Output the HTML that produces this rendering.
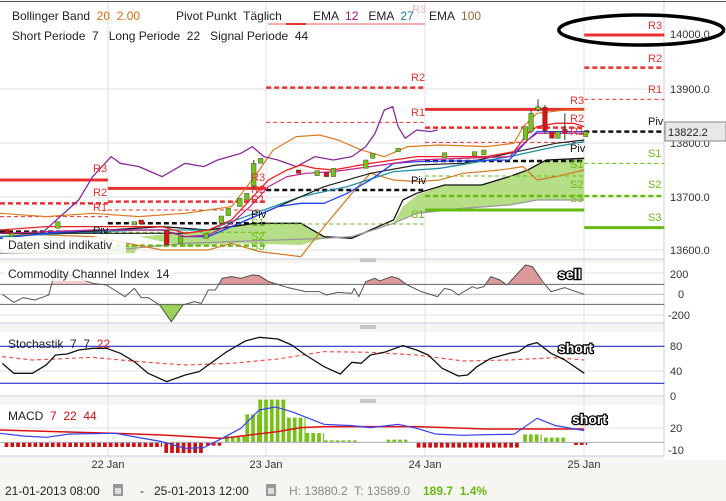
<!DOCTYPE html>
<html><head><meta charset="utf-8"><style>
body{margin:0;width:726px;height:501px;background:#f6f5f1;font-family:"Liberation Sans",sans-serif;overflow:hidden;position:relative}
svg{position:absolute;left:0;top:0}
text{font-family:"Liberation Sans",sans-serif;white-space:pre}
</style></head><body>
<svg width="726" height="501" viewBox="0 0 726 501" xml:space="preserve">
<rect x="0" y="2" width="664" height="257" fill="#fff"/>
<rect x="0" y="263" width="664" height="60" fill="#fff"/>
<rect x="0" y="332" width="664" height="64" fill="#fff"/>
<rect x="0" y="405" width="664" height="51" fill="#fff"/>
<rect x="664" y="0" width="62" height="460" fill="#fff"/>
<line x1="0" y1="1.5" x2="726" y2="1.5" stroke="#555"/>
<g stroke="#e2e2e2" stroke-width="1">
<line x1="0" y1="89" x2="664" y2="89"/><line x1="0" y1="143" x2="664" y2="143"/><line x1="0" y1="197" x2="664" y2="197"/><line x1="0" y1="250" x2="664" y2="250"/>
<line x1="108" y1="2" x2="108" y2="456"/><line x1="266" y1="2" x2="266" y2="456"/><line x1="425" y1="2" x2="425" y2="456"/><line x1="584" y1="2" x2="584" y2="456"/>
<line x1="0" y1="273" x2="664" y2="273"/><line x1="0" y1="315" x2="664" y2="315"/>
<line x1="0" y1="371" x2="664" y2="371"/><line x1="0" y1="428" x2="664" y2="428"/>
</g>
<g stroke="#ccd" stroke-width="1"><line x1="664" y1="2" x2="664" y2="456"/>
<line x1="0" y1="259" x2="664" y2="259"/><line x1="0" y1="323" x2="664" y2="323"/><line x1="0" y1="396" x2="664" y2="396"/><line x1="0" y1="456" x2="664" y2="456"/></g>
<g stroke="#999"><line x1="360" y1="259" x2="376" y2="259"/><line x1="360" y1="261" x2="376" y2="261"/><line x1="360" y1="326" x2="376" y2="326"/><line x1="360" y1="328" x2="376" y2="328"/><line x1="360" y1="400" x2="376" y2="400"/><line x1="360" y1="402" x2="376" y2="402"/></g>

<g transform="scale(0.463,0.3333)" fill="none" stroke-linejoin="round">
<path d="M290,780 L300,710 L400,740 L500,730 L650,735 L700,715 L760,710 L800,690 L850,670 L870,620 L900,585 L960,555 L1040,555 L1100,530 L1140,510 L1180,480 L1262,475 L1262,600 L1160,600 L1100,615 L1000,625 L900,640 L850,670 L760,715 L700,710 L650,670 L550,670 L450,690 L380,700 L300,710" fill="#b5de86" stroke="none"/>
<path d="M0,760 L60,740 L200,745 L300,735 L290,760 Z" fill="#b5de86" stroke="none"/>
<path d="M0,710 L350,680 L450,690 L550,670 L650,670 L700,710 L760,715 L800,690 L850,660 L870,600 L900,580 L960,555 L1040,555 L1100,530 L1140,510 L1180,480 L1262,475" stroke="#111" stroke-width="1.3" vector-effect="non-scaling-stroke"/>
<path d="M0,760 L250,750 L400,730 L700,715 L760,710 L850,670 L900,640 L1000,625 L1100,615 L1160,600 L1262,600" stroke="#999" stroke-width="1.3" vector-effect="non-scaling-stroke"/>
<path d="M0,540H233 M233,565H575 M918,328H1262 M1262,105H1435" stroke="#e83030" stroke-width="3" vector-effect="non-scaling-stroke"/>
<path d="M0,610H233 M233,605H575 M575,263H915 M918,383H1262 M1262,203H1435" stroke="#e83030" stroke-width="2.5" stroke-dasharray="5 3" vector-effect="non-scaling-stroke"/>
<path d="M0,650H233 M233,630H575 M575,367H915 M918,427H1262 M1262,298H1435" stroke="#e83030" stroke-width="1" stroke-dasharray="4 3" vector-effect="non-scaling-stroke"/>
<path d="M0,695H233 M233,670H575 M575,570H915 M918,483H1262 M1262,395H1568" stroke="#111" stroke-width="2.5" stroke-dasharray="5 3" vector-effect="non-scaling-stroke"/>
<path d="M0,715H233 M233,697H575 M575,672H915 M918,528H1262 M1262,490H1435" stroke="#66bb11" stroke-width="1" stroke-dasharray="4 3" vector-effect="non-scaling-stroke"/>
<path d="M233,737H575 M918,588H1262 M1262,588H1435" stroke="#66bb11" stroke-width="2.5" stroke-dasharray="5 3" vector-effect="non-scaling-stroke"/>
<path d="M918,630H1262 M1262,683H1435" stroke="#66bb11" stroke-width="3" vector-effect="non-scaling-stroke"/>
<path d="M0,640 L100,650 L200,640 L300,650 L400,640 L500,620 L550,530 L590,450 L640,410 L690,405 L730,420 L780,450 L830,470 L880,440 L950,435 L1050,440 L1110,430 L1130,380 L1160,340 L1220,330 L1262,330" stroke="#e07a20" stroke-width="1.2" vector-effect="non-scaling-stroke"/>
<path d="M0,700 L200,710 L350,750 L450,750 L500,730 L560,755 L650,770 L700,680 L760,580 L800,520 L850,540 L900,545 L950,540 L1000,520 L1080,510 L1130,500 L1160,540 L1200,530 L1262,510" stroke="#d47a20" stroke-width="1.2" vector-effect="non-scaling-stroke"/>
<path d="M90,700 L130,650 L170,600 L200,530 L240,470 L260,490 L300,500 L350,530 L400,490 L440,500 L470,480 L520,460 L545,440 L570,470 L600,480 L640,500 L680,470 L720,480 L760,470 L790,440 L810,400 L830,330 L848,320 L860,380 L875,415 L900,390 L930,395 L945,390" stroke="#8a2a9a" stroke-width="1.3" vector-effect="non-scaling-stroke"/>
<path d="M0,710 L300,690 L450,690 L550,640 L650,590 L750,560 L850,515 L950,505 L1100,470 L1200,440 L1262,425" stroke="#2090a8" stroke-width="1.3" vector-effect="non-scaling-stroke"/>
<path d="M0,700 L400,700 L500,680 L600,620 L700,560 L800,520 L900,495 L1000,490 L1100,460 L1200,430 L1262,420" stroke="#222" stroke-width="1.2" vector-effect="non-scaling-stroke"/>
<path d="M0,715 L100,700 L200,690 L350,690 L400,710 L450,710 L550,650 L600,620 L650,610 L700,610 L750,580 L800,540 L850,490 L900,485 L1100,480 L1140,420 L1160,395 L1262,395" stroke="#2244ee" stroke-width="1.3" vector-effect="non-scaling-stroke"/>
<path d="M0,700 L200,690 L350,690 L400,710 L450,705 L500,670 L540,620 L580,560 L620,530 L660,520 L720,515 L800,500 L900,480 L1100,470 L1140,420 L1160,400 L1200,400 L1262,400" stroke="#c0208a" stroke-width="1.2" vector-effect="non-scaling-stroke"/>
<path d="M0,690 L100,680 L200,680 L350,680 L400,700 L450,690 L500,660 L540,600 L580,540 L620,510 L650,495 L680,505 L720,510 L760,500 L800,490 L850,480 L900,470 L950,470 L1050,470 L1110,455 L1140,400 L1160,380 L1200,370 L1240,370 L1262,380" stroke="#ee2222" stroke-width="1.3" vector-effect="non-scaling-stroke"/>
<g stroke="#333" stroke-width="1">
<line x1="548" y1="480" x2="548" y2="570" vector-effect="non-scaling-stroke"/><line x1="1147" y1="330" x2="1147" y2="400" vector-effect="non-scaling-stroke"/><line x1="1162" y1="298" x2="1162" y2="335" vector-effect="non-scaling-stroke"/><line x1="1177" y1="315" x2="1177" y2="400" vector-effect="non-scaling-stroke"/><line x1="1220" y1="340" x2="1220" y2="420" vector-effect="non-scaling-stroke"/>
</g>
<g fill="#77c11a" stroke="#333">
<rect x="543" y="490" width="10" height="70"/><rect x="558" y="475" width="10" height="15"/><rect x="473" y="648" width="10" height="22"/><rect x="488" y="625" width="10" height="22"/><rect x="513" y="595" width="10" height="25"/><rect x="528" y="580" width="10" height="20"/>
<rect x="1142" y="340" width="10" height="55"/><rect x="1157" y="320" width="10" height="10"/><rect x="1200" y="395" width="10" height="20"/><rect x="1260" y="395" width="10" height="15"/><rect x="1130" y="380" width="10" height="40"/>
<rect x="680" y="512" width="10" height="15"/><rect x="715" y="505" width="10" height="25"/><rect x="785" y="480" width="10" height="25"/><rect x="800" y="460" width="10" height="15"/><rect x="855" y="445" width="10" height="10"/><rect x="955" y="458" width="10" height="15"/><rect x="1020" y="455" width="10" height="12"/><rect x="1040" y="450" width="10" height="15"/><rect x="120" y="665" width="10" height="20"/><rect x="20" y="700" width="10" height="10"/><rect x="285" y="665" width="10" height="10"/><rect x="440" y="700" width="10" height="15"/><rect x="385" y="710" width="10" height="20"/>
</g>
<g fill="#dd1111" stroke="#333">
<rect x="1172" y="322" width="10" height="70"/><rect x="1187" y="395" width="10" height="20"/><rect x="1215" y="388" width="10" height="10"/><rect x="355" y="690" width="10" height="45"/><rect x="300" y="660" width="10" height="12"/><rect x="640" y="510" width="10" height="10"/><rect x="700" y="518" width="10" height="12"/><rect x="10" y="690" width="10" height="10"/>
</g>
<ellipse cx="1385" cy="90" rx="178" ry="45" stroke="#000" stroke-width="3.5" vector-effect="non-scaling-stroke"/>
</g>

<g font-size="11" fill="#e83030">
<text x="93" y="172">R3</text><text x="93" y="196">R2</text><text x="93" y="211">R1</text>
<text x="251" y="181">R3</text><text x="251" y="193">R2</text><text x="251" y="203">R1</text>
<text x="411" y="81">R2</text><text x="411" y="116">R1</text>
<text x="570" y="104">R3</text><text x="570" y="122">R2</text><text x="570" y="135">R1</text>
<text x="648" y="29">R3</text><text x="648" y="62">R2</text><text x="648" y="93">R1</text>
</g>
<g font-size="11" fill="#111"><text x="93" y="234">Piv</text><text x="251" y="218">Piv</text><text x="411" y="184">Piv</text><text x="570" y="152">Piv</text><text x="648" y="125">Piv</text></g>
<g font-size="11" fill="#66bb11">
<text x="251" y="226">S1</text><text x="251" y="240">S2</text><text x="251" y="250">S3</text>
<text x="411" y="218">S1</text>
<text x="570" y="168">S1</text><text x="570" y="188">S2</text><text x="570" y="202">S3</text>
<text x="648" y="157">S1</text><text x="648" y="188">S2</text><text x="648" y="221">S3</text>
</g>
<g font-size="11" fill="#333">
<text x="670" y="38">14000.0</text><text x="670" y="93">13900.0</text><text x="670" y="147">13800.0</text><text x="670" y="201">13700.0</text><text x="670" y="254">13600.0</text>
<text x="670" y="278">200</text><text x="678" y="298">0</text><text x="668" y="319">-200</text>
<text x="670" y="350">80</text><text x="670" y="375">40</text><text x="670" y="400">0</text>
<text x="670" y="432">20</text><text x="668" y="454">-10</text>
</g>
<rect x="665" y="122" width="61" height="19" fill="#e8e8e8" stroke="#888"/>
<text x="668" y="136" font-size="11" fill="#222">13822.2</text>
<g font-size="12" fill="#222">
<text x="12" y="20">Bollinger Band  <tspan fill="#e06a10">20  2.00</tspan></text>
<text x="176" y="20">Pivot Punkt  Täglich</text>
<text x="313" y="20">EMA  <tspan fill="#a0107a">12</tspan>   EMA  <tspan fill="#1a7f98">27</tspan></text>
<text x="429" y="20">EMA  <tspan fill="#996633">100</tspan></text>
<text x="12" y="40">Short Periode  7   Long Periode  22   Signal Periode  44</text>
</g>
<line x1="268" y1="24" x2="425" y2="24" stroke="#f4b0b0" stroke-width="2"/><line x1="286" y1="24" x2="306" y2="24" stroke="#e83030" stroke-width="2"/>
<text x="412" y="13" font-size="11" fill="#f0b0b0">R3</text>
<rect x="3" y="237" width="123" height="16" fill="#fff" opacity="0.85"/>
<text x="8" y="249" font-size="12" fill="#222">Daten sind indikativ</text>

<g transform="translate(0,255) scale(0.463,0.3333)" fill="none" stroke-linejoin="round">
<path d="M110,88 L115,70 L150,60 L200,85 L230,88 Z" fill="#f6d0d0"/>
<path d="M475,88 L480,70 L500,65 L520,70 L545,60 L560,62 L580,80 L600,88 Z M788,88 L790,80 L810,70 L820,78 L845,65 L860,70 L875,88 Z M1052,88 L1060,65 L1080,75 L1090,88 Z M1098,88 L1115,60 L1135,30 L1150,35 L1172,88 Z" fill="#dc9a9a" stroke="#c88" vector-effect="non-scaling-stroke"/>
<path d="M335,148 L345,150 L370,200 L395,150 Z" fill="#9ad25a" stroke="#7b3" vector-effect="non-scaling-stroke"/>
<path d="M0,88H1435 M0,148H1435" stroke="#666" stroke-width="1" vector-effect="non-scaling-stroke"/>
<path d="M0,118H1435" stroke="#bbc" vector-effect="non-scaling-stroke"/>
<path d="M5,118 L30,142 L50,128 L75,135 L95,125 L105,120 L115,70 L150,60 L200,85 L230,90 L270,125 L290,100 L305,128 L320,128 L345,150 L370,200 L395,150 L420,140 L435,145 L450,105 L465,105 L480,70 L500,65 L520,70 L545,60 L560,62 L580,80 L620,97 L660,110 L690,110 L705,120 L730,112 L760,115 L765,100 L775,125 L790,80 L810,70 L820,78 L845,65 L860,70 L880,90 L910,110 L945,125 L960,100 L975,105 L990,120 L1020,95 L1030,100 L1045,95 L1060,65 L1080,75 L1095,90 L1115,60 L1135,30 L1150,35 L1175,85 L1190,110 L1220,98 L1240,108 L1262,118" stroke="#555" stroke-width="1" vector-effect="non-scaling-stroke"/>
<path d="M0,274H1435 M0,385H1435" stroke="#2233cc" stroke-width="1.2" vector-effect="non-scaling-stroke"/>
<path d="M5,305 L70,315 L200,307 L300,320 L400,330 L500,325 L600,312 L700,290 L800,292 L900,300 L1000,318 L1100,315 L1200,308 L1262,315" stroke="#f05050" stroke-width="1.2" stroke-dasharray="4 3" vector-effect="non-scaling-stroke"/>
<path d="M5,325 L30,355 L70,355 L100,330 L120,300 L145,297 L170,285 L200,280 L230,280 L260,295 L290,320 L320,355 L360,380 L400,360 L430,350 L460,320 L490,290 L530,258 L560,247 L600,252 L630,270 L660,300 L700,335 L735,357 L760,322 L780,325 L800,300 L830,292 L870,272 L900,285 L925,300 L955,340 L990,363 L1010,360 L1030,335 L1060,310 L1100,295 L1120,290 L1140,270 L1160,263 L1190,295 L1220,315 L1262,355" stroke="#111" stroke-width="1.3" vector-effect="non-scaling-stroke"/>
<g stroke-dasharray="8 4.5">
<path d="M10,569H350" stroke="#cc1111" stroke-width="14"/>
<path d="M355,578H440" stroke="#cc1111" stroke-width="32"/>
<path d="M445,567H480" stroke="#cc1111" stroke-width="10"/>
<path d="M486,553H530" stroke="#77c11a" stroke-width="18"/>
<path d="M530,520H560" stroke="#77c11a" stroke-width="84"/>
<path d="M558,498H620" stroke="#77c11a" stroke-width="128"/>
<path d="M620,525H660" stroke="#77c11a" stroke-width="74"/>
<path d="M660,548H700" stroke="#77c11a" stroke-width="28"/>
<path d="M700,559H770" stroke="#77c11a" stroke-width="6"/>
<path d="M835,558H880" stroke="#77c11a" stroke-width="8"/>
<path d="M900,570H1125" stroke="#cc1111" stroke-width="16"/>
<path d="M1130,550H1170" stroke="#77c11a" stroke-width="24"/>
<path d="M1175,555H1225" stroke="#77c11a" stroke-width="14"/>
<path d="M1240,566H1268" stroke="#cc1111" stroke-width="8"/>
</g>
<path d="M0,562H1435" stroke="#aab" vector-effect="non-scaling-stroke"/>
<path d="M0,525 L250,535 L350,540 L480,550 L540,540 L600,530 L650,518 L700,515 L900,515 L1050,522 L1262,522" stroke="#dd1111" stroke-width="1.5" vector-effect="non-scaling-stroke"/>
<path d="M0,535 L50,543 L100,547 L150,537 L250,535 L300,548 L350,560 L400,580 L440,578 L480,550 L520,520 L560,465 L595,456 L630,470 L670,492 L700,508 L760,512 L800,518 L860,508 L900,520 L940,537 L1000,541 L1050,539 L1110,538 L1160,490 L1200,512 L1262,527" stroke="#3344ee" stroke-width="1.2" vector-effect="non-scaling-stroke"/>
</g>
<g font-size="12" fill="#222">
<rect x="4" y="264" width="170" height="17" fill="#fff" opacity="0.8"/>
<text x="8" y="278">Commodity Channel Index  14</text>
<text x="8" y="348">Stochastik  7  7  <tspan fill="#e02020">22</tspan></text>
<text x="8" y="420">MACD  <tspan fill="#cc1111">7  22  44</tspan></text>
</g>
<g font-size="14" font-weight="bold" fill="#fff" stroke="#000" stroke-width="2.5" paint-order="stroke">
<text x="558" y="279">sell</text><text x="558" y="353">short</text><text x="572" y="424">short</text>
</g>
<g font-size="11" fill="#333" text-anchor="middle">
<text x="108" y="468">22 Jan</text><text x="266" y="468">23 Jan</text><text x="425" y="468">24 Jan</text><text x="584" y="468">25 Jan</text>
</g>
<g font-size="12">
<text x="5" y="495" fill="#222">21-01-2013 08:00</text>
<rect x="113" y="484" width="10" height="12" fill="#999"/><rect x="115" y="488" width="6" height="6" fill="#ddd"/>
<text x="140" y="495" fill="#222">-   25-01-2013 12:00</text>
<rect x="266" y="484" width="10" height="12" fill="#999"/><rect x="268" y="488" width="6" height="6" fill="#ddd"/>
<text x="289" y="495" fill="#888">H: 13880.2  T: 13589.0</text>
<text x="423" y="495" fill="#66bb11" font-weight="bold">189.7  1.4%</text>
</g>
</svg>
</body></html>
